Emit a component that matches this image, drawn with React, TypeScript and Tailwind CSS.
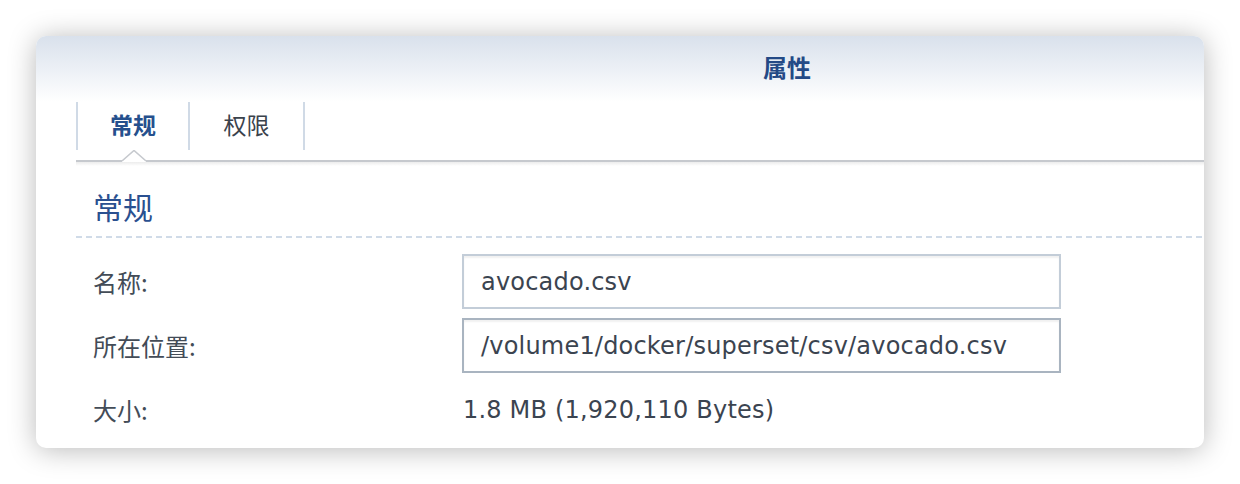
const CJK = "font-['Noto_Sans_CJK_SC',sans-serif]";
const LATIN = "font-['DejaVu_Sans','Noto_Sans_CJK_SC',sans-serif]";

function Field({ value, strong }: { value: string; strong?: boolean }) {
  return (
    <div
      className={`flex items-center h-[55px] w-[599px] px-[17px] bg-white border-2 shadow-[inset_0_2px_2px_rgba(0,0,0,0.06)] ${
        strong ? "border-[#a9b4c0]" : "border-[#c3cdd8]"
      }`}
    >
      <span className={`${LATIN} text-[24px] text-[#3b4450] tracking-[0.2px]`}>{value}</span>
    </div>
  );
}

export default function App() {
  return (
    <div className="w-[1240px] h-[484px] bg-white pt-9 pl-9">
      <div className="w-[1168px] h-[412px] rounded-[10px] bg-white overflow-hidden shadow-[0_2px_28px_rgba(0,0,0,0.28)] flex flex-col">
        {/* title bar */}
        <div className="h-[66px] shrink-0 bg-gradient-to-b from-[#d9e1ec] to-white flex items-center pl-[727px] pb-[4px]">
          <span className={`${CJK} text-[24px] font-bold text-[#244a86]`}>属性</span>
        </div>

        <div className="pl-10 flex flex-col">
          {/* tabs */}
          <div className="flex h-[48px]">
            <div className="w-[114px] border-l-2 border-r-2 border-[#d0dae6] flex items-center justify-center pb-[4px]">
              <span className={`${CJK} text-[23px] font-bold text-[#25508d]`}>常规</span>
            </div>
            <div className="w-[115px] border-r-2 border-[#d0dae6] flex items-center justify-center pb-[4px]">
              <span className={`${CJK} text-[23px] text-[#3a424c]`}>权限</span>
            </div>
          </div>
          <div className="flex items-end h-[12px]">
            <div className="w-[46px] h-[2px] bg-[#c6c9ce]" />
            <svg width="24" height="12" viewBox="0 0 24 12" className="block">
              <polyline points="0,11 12,0.5 24,11" fill="white" stroke="#c6c9ce" strokeWidth="1.6" />
            </svg>
            <div className="flex-1 h-[2px] bg-[#c6c9ce]" />
          </div>
          <div className="h-[4px] bg-gradient-to-b from-[#ececec] to-white" />

          {/* section */}
          <div className="pl-[17px] pt-[20px] h-[70px]">
            <span className={`${CJK} text-[30px] leading-[40px] text-[#2a5090]`}>常规</span>
          </div>
          <div className="h-[2px] bg-[repeating-linear-gradient(90deg,#d0dbe8_0_6px,transparent_6px_10px)]" />

          {/* rows */}
          <div className="flex flex-col pt-[16px] gap-[9px]">
            <div className="flex items-center">
              <span className={`${CJK} w-[386px] pl-[17px] text-[24px] text-[#434c57]`}>名称:</span>
              <Field value="avocado.csv" />
            </div>
            <div className="flex items-center">
              <span className={`${CJK} w-[386px] pl-[17px] text-[24px] text-[#434c57]`}>所在位置:</span>
              <Field value="/volume1/docker/superset/csv/avocado.csv" strong />
            </div>
            <div className="flex items-center h-[56px]">
              <span className={`${CJK} w-[386px] pl-[17px] text-[24px] text-[#434c57]`}>大小:</span>
              <span className={`${LATIN} pl-[1px] text-[24px] text-[#3b4450] tracking-[0.2px]`}>
                1.8 MB (1,920,110 Bytes)
              </span>
            </div>
          </div>
        </div>
      </div>
    </div>
  );
}
